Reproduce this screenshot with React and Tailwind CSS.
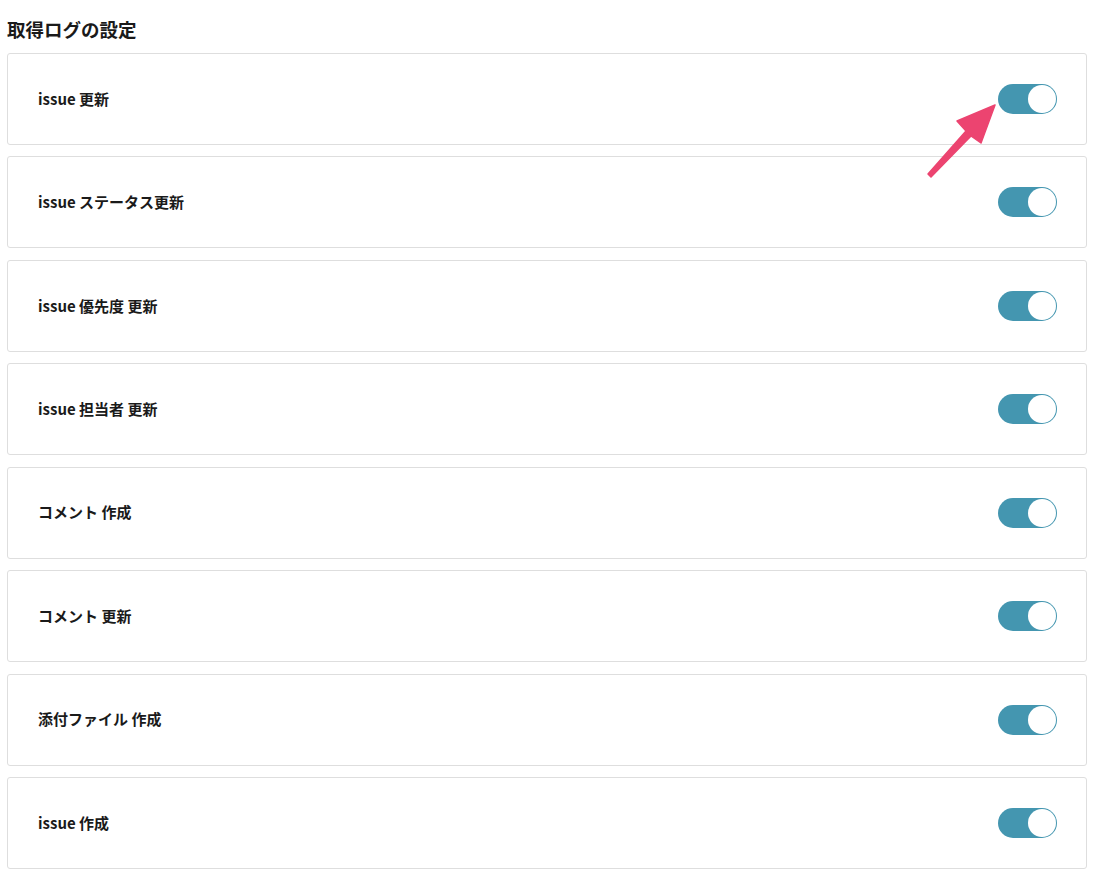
import React from "react";

const items = [
  "issue 更新",
  "issue ステータス更新",
  "issue 優先度 更新",
  "issue 担当者 更新",
  "コメント 作成",
  "コメント 更新",
  "添付ファイル 作成",
  "issue 作成",
];

function Toggle() {
  return (
    <div className="w-[59px] h-[30px] rounded-full bg-[#4496b0] flex items-center justify-end pr-[1px]">
      <div className="w-[28px] h-[28px] rounded-full bg-white" />
    </div>
  );
}

export default function App() {
  return (
    <div
      className="relative w-[1102px] h-[882px] bg-white text-[#1a1a1a]"
      style={{ fontFamily: '"Noto Sans CJK JP", "Noto Sans", sans-serif' }}
    >
      <div className="w-[1080px] ml-[7px] pt-[16px]">
        <h2 className="text-[18.5px] font-bold leading-[26px] h-[37px]">取得ログの設定</h2>
        <div className="flex flex-col gap-[11.43px]">
          {items.map((label) => (
            <div
              key={label}
              className="h-[92px] border border-[#dedede] rounded-[3px] flex items-center justify-between pl-[30px] pr-[29px]"
            >
              <span className="text-[15px] font-semibold">{label}</span>
              <Toggle />
            </div>
          ))}
        </div>
      </div>

      {/* annotation arrow */}
      <svg className="absolute left-0 top-0 pointer-events-none" width="1102" height="882">
        <polygon
          points="995,105 957,121 966,131 928,174 931,177 971,136 981,143"
          fill="#ec4470"
          stroke="#ec4470"
          strokeWidth="1.5"
          strokeLinejoin="round"
        />
      </svg>
    </div>
  );
}
